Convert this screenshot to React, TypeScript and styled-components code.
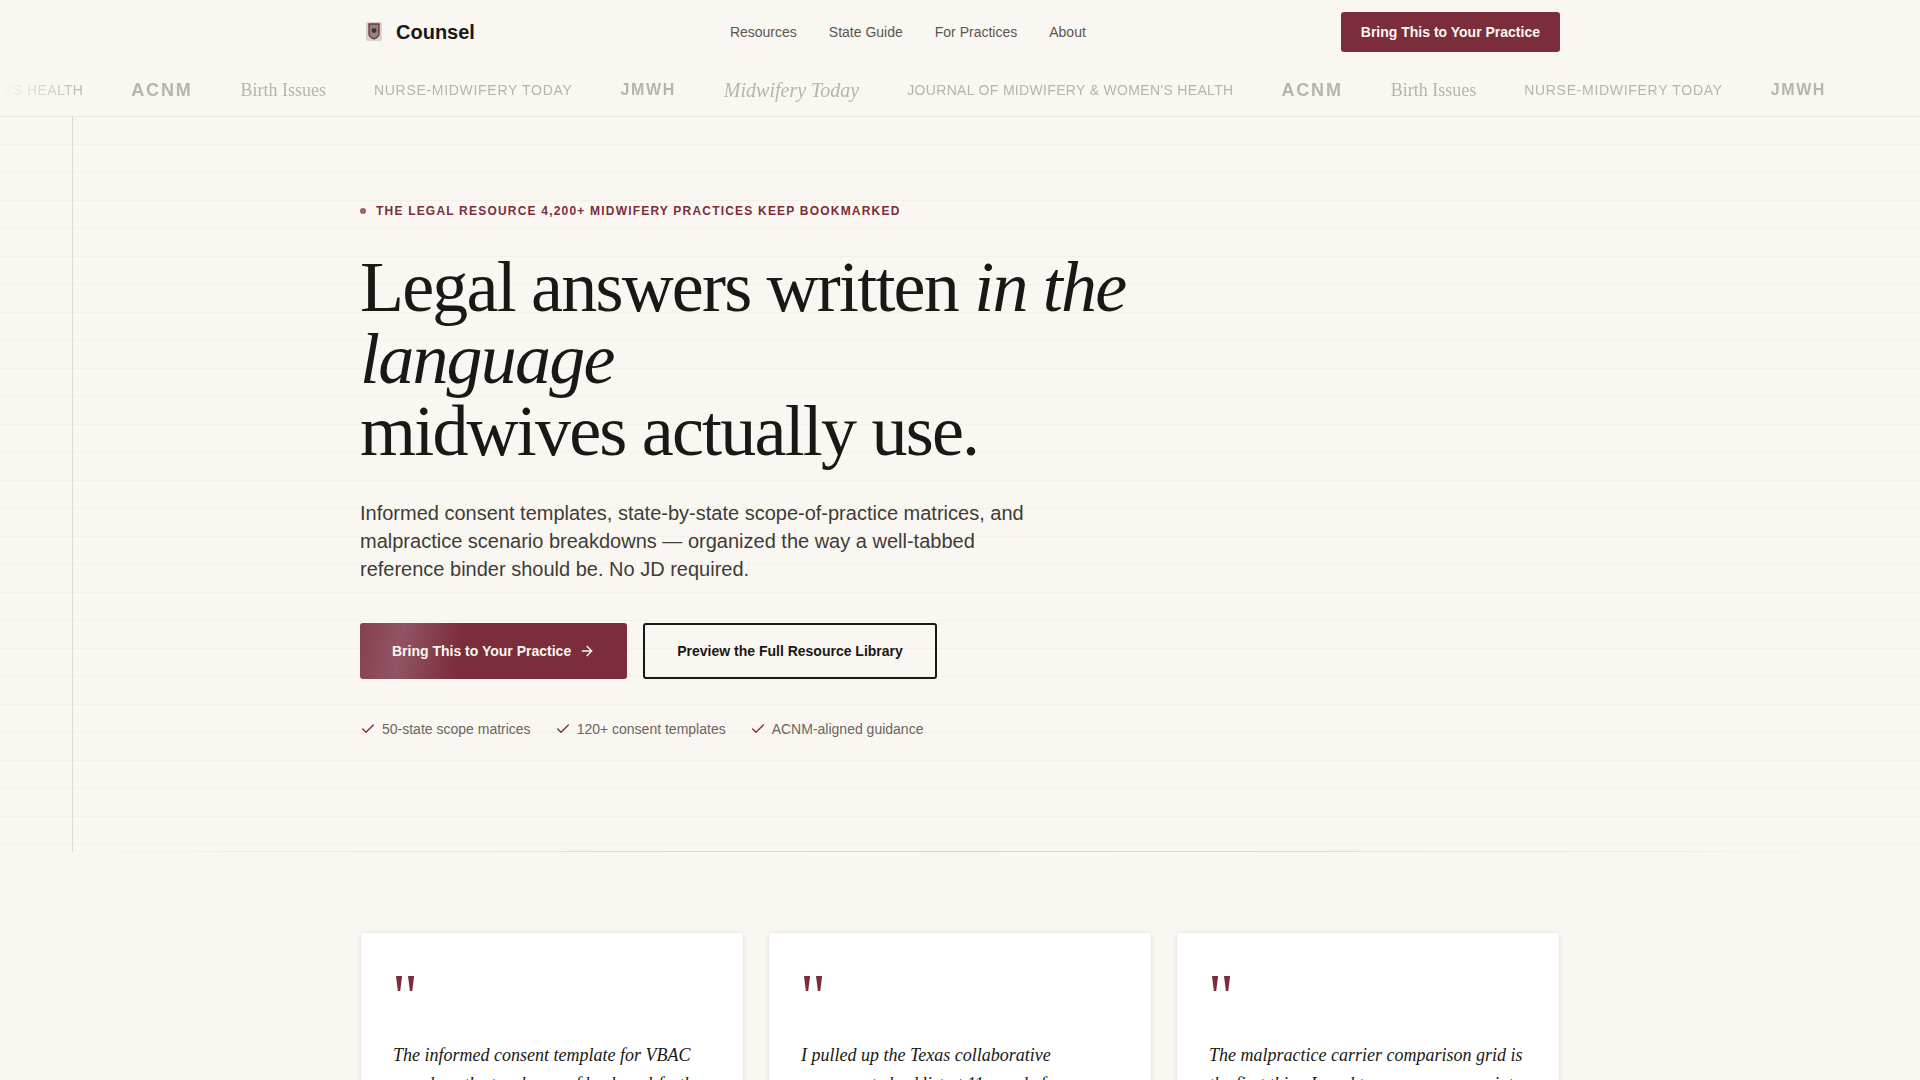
import React from 'react';
import styled, { createGlobalStyle } from 'styled-components';
import { ArrowRight, Check } from 'lucide-react';

const Global = createGlobalStyle`
  * { box-sizing: border-box; }
  html, body { margin: 0; padding: 0; background: #faf7f2; }
  body { font-family: "Liberation Sans", Arial, sans-serif; color: #1a1814; overflow-x: hidden; }
`;
const Page = styled.div`background:#faf7f2;`;
const Nav = styled.nav`height:64px;display:flex;align-items:center;justify-content:center;`;
const NavInner = styled.div`width:1200px;display:flex;align-items:center;justify-content:space-between;`;
const Brand = styled.div`display:flex;align-items:center;gap:12px;font-size:20px;font-weight:700;color:#1a1814;`;
const Logo = styled.svg`width:24px;height:24px;flex:none;`;
const NavLinks = styled.div`display:flex;gap:32px;font-size:14px;color:#5c5650;`;
const NavButton = styled.a`display:block;background:#7b2d3b;color:#faf7f2;font-size:14px;font-weight:700;padding:0 20px;height:40px;line-height:40px;border-radius:3px;`;
const MarqueeBar = styled.div`height:53px;border-bottom:1px solid #ebe7e0;`;
const Marquee = styled.div`
  height:52px;overflow:hidden;display:flex;align-items:center;
  -webkit-mask-image:linear-gradient(to right,transparent 0,#000 90px,#000 calc(100% - 90px),transparent 100%);
`;
const Track = styled.div`display:flex;align-items:center;gap:48px;margin-left:-243px;white-space:nowrap;color:#b8b3ab;flex:none;`;
const Mark = styled.span<{ $kind: string }>`
  ${p => p.$kind === 'bold' && 'font-size:18px;font-weight:700;letter-spacing:1.8px;'}
  ${p => p.$kind === 'serif' && 'font-family:"Liberation Serif",serif;font-size:18px;'}
  ${p => p.$kind === 'italic' && 'font-family:"Liberation Serif",serif;font-style:italic;font-size:20px;'}
  ${p => p.$kind === 'caps' && 'font-size:14px;letter-spacing:.7px;'}
  ${p => p.$kind === 'journal' && 'font-size:14px;letter-spacing:.33px;'}
  ${p => p.$kind === 'small' && 'font-size:16px;font-weight:700;letter-spacing:1.6px;'}
`;
const Hero = styled.section`
  position:relative;height:735px;
  background-image:repeating-linear-gradient(to bottom,transparent 0,transparent 27px,#f4f0e9 27px,#f4f0e9 28px);
  &::before{content:"";position:absolute;left:72px;top:0;bottom:0;width:1px;background:#ddd8d0;}
  &::after{content:"";position:absolute;left:0;right:0;bottom:0;height:1px;background:linear-gradient(to right,transparent,#d5d0c8 50%,transparent);}
`;
const HeroInner = styled.div`width:1200px;margin:0 auto;padding-top:87px;`;
const Eyebrow = styled.div`display:flex;align-items:center;gap:10px;font-size:12px;font-weight:700;letter-spacing:1.2px;color:#7b2d3b;text-transform:uppercase;line-height:14px;margin-bottom:33px;`;
const Dot = styled.span`width:6px;height:6px;border-radius:50%;background:#7b2d3b;opacity:.75;`;
const Title = styled.h1`font-family:"Liberation Serif",serif;font-weight:400;font-size:72px;line-height:72px;letter-spacing:-1.8px;margin:0 0 32px;width:800px;color:#1a1814;em{font-style:italic;}`;
const Lead = styled.p`font-size:20px;line-height:28px;color:#3f3b37;margin:0 0 40px;width:680px;`;
const Actions = styled.div`display:flex;gap:16px;margin-bottom:42px;`;
const Primary = styled.a`display:flex;align-items:center;gap:8px;height:56px;padding:0 32px;background:linear-gradient(100deg,#85404d 0,#915464 16%,#7b2d3b 38%);color:#faf7f2;font-size:14px;font-weight:700;border-radius:3px;`;
const Secondary = styled.a`display:flex;align-items:center;height:56px;padding:0 32px;border:2px solid #1a1814;color:#1a1814;font-size:14px;font-weight:700;border-radius:3px;`;
const Checks = styled.div`display:flex;gap:24px;font-size:14px;color:#6b655e;`;
const CheckItem = styled.span`display:flex;align-items:center;gap:6px;svg{color:#7b2d3b;}`;
const Cards = styled.section`width:1200px;margin:80px auto 0;display:grid;grid-template-columns:repeat(3,1fr);gap:24px;`;
const Card = styled.article`background:#fff;border:1px solid #f1ede6;border-radius:4px;padding:32px;box-shadow:0 1px 4px rgba(60,50,30,.1);height:400px;`;
const QuoteMark = styled.div`font-family:"Liberation Serif",serif;color:#7b2d3b;font-size:64px;line-height:64px;height:76px;margin-left:-1px;`;
const QuoteText = styled.p`font-family:"Liberation Serif",serif;font-style:italic;font-size:18px;line-height:28.8px;margin:0;color:#1a1814;`;

const marks: [string, string][] = [
  ['journal', "JOURNAL OF MIDWIFERY & WOMEN'S HEALTH"], ['bold', 'ACNM'], ['serif', 'Birth Issues'], ['caps', 'NURSE-MIDWIFERY TODAY'], ['small', 'JMWH'], ['italic', 'Midwifery Today'],
  ['journal', "JOURNAL OF MIDWIFERY & WOMEN'S HEALTH"], ['bold', 'ACNM'], ['serif', 'Birth Issues'], ['caps', 'NURSE-MIDWIFERY TODAY'], ['small', 'JMWH'],
];
const quotes = [
  'The informed consent template for VBAC saved me the two hours of back-and-forth with families.',
  'I pulled up the Texas collaborative agreement checklist at 11 p.m. before my board meeting.',
  'The malpractice carrier comparison grid is the first thing I send to every new associate.',
];
export default function App() {
  return (
    <Page>
      <Global />
      <Nav><NavInner>
        <Brand>
          <Logo viewBox="0 0 24 24">
            <rect x="6" y="2" width="16" height="19" rx="2" fill="#d8d4cd" />
            <path d="M9 4h10v10c0 2.500-2.500 4-5 5-2.500-1-5-2.500-5-5z" fill="#8a8580" stroke="#7b2d3b" strokeWidth="1.300" />
            <circle cx="14" cy="10.500" r="2.400" fill="#3a3632" />
          </Logo>
          Counsel
        </Brand>
        <NavLinks><span>Resources</span><span>State Guide</span><span>For Practices</span><span>About</span></NavLinks>
        <NavButton>Bring This to Your Practice</NavButton>
      </NavInner></Nav>
      <MarqueeBar><Marquee><Track>{marks.map(([k, t], i) => <Mark key={i} $kind={k}>{t}</Mark>)}</Track></Marquee></MarqueeBar>
      <Hero><HeroInner>
        <Eyebrow><Dot />The legal resource 4,200+ midwifery practices keep bookmarked</Eyebrow>
        <Title>Legal answers written <em>in the language</em><br />midwives actually use.</Title>
        <Lead>Informed consent templates, state-by-state scope-of-practice matrices, and malpractice scenario breakdowns — organized the way a well-tabbed reference binder should be. No JD required.</Lead>
        <Actions><Primary>Bring This to Your Practice <ArrowRight size={16} /></Primary><Secondary>Preview the Full Resource Library</Secondary></Actions>
        <Checks>
          <CheckItem><Check size={16} />50-state scope matrices</CheckItem>
          <CheckItem><Check size={16} />120+ consent templates</CheckItem>
          <CheckItem><Check size={16} />ACNM-aligned guidance</CheckItem>
        </Checks>
      </HeroInner></Hero>
      <Cards>{quotes.map(q => <Card key={q}><QuoteMark>"</QuoteMark><QuoteText>{q}</QuoteText></Card>)}</Cards>
    </Page>
  );
}
